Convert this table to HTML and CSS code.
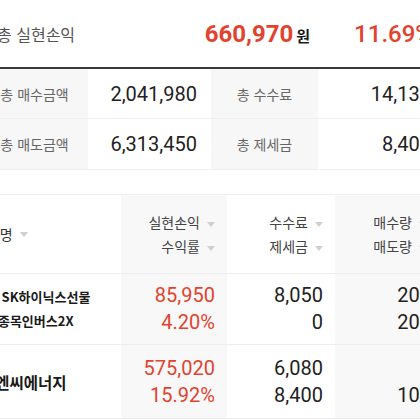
FILE: index.html
```html
<!DOCTYPE html>
<html lang="ko">
<head>
<meta charset="utf-8">
<title>실현손익</title>
<link rel="stylesheet" href="styles.css">
</head>
<body>
<div class="page">
  <div class="total">
    <span class="total-label">총 실현손익</span>
    <span class="total-amount">660,970<span class="won">원</span></span>
    <span class="total-rate">11.69%</span>
  </div>
  <div class="summary">
    <div class="s-label">총 매수금액</div>
    <div class="s-value">2,041,980</div>
    <div class="s-label">총 수수료</div>
    <div class="s-value">14,130</div>
    <div class="s-label">총 매도금액</div>
    <div class="s-value">6,313,450</div>
    <div class="s-label">총 제세금</div>
    <div class="s-value">8,400</div>
  </div>
</div>
<div class="table">
  <div class="cell head name">종목명<svg class="tri" width="8" height="5" viewBox="0 0 8 5"><path d="M0 0h8L4 5z"/></svg></div>
  <div class="cell head num shade">
    <div>실현손익<svg class="tri" width="8" height="5" viewBox="0 0 8 5"><path d="M0 0h8L4 5z"/></svg></div>
    <div>수익률<svg class="tri" width="8" height="5" viewBox="0 0 8 5"><path d="M0 0h8L4 5z"/></svg></div>
  </div>
  <div class="cell head num">
    <div>수수료<svg class="tri" width="8" height="5" viewBox="0 0 8 5"><path d="M0 0h8L4 5z"/></svg></div>
    <div>제세금<svg class="tri" width="8" height="5" viewBox="0 0 8 5"><path d="M0 0h8L4 5z"/></svg></div>
  </div>
  <div class="cell head num last shade">
    <div>매수량<svg class="tri" width="8" height="5" viewBox="0 0 8 5"><path d="M0 0h8L4 5z"/></svg></div>
    <div>매도량<svg class="tri" width="8" height="5" viewBox="0 0 8 5"><path d="M0 0h8L4 5z"/></svg></div>
  </div>

  <div class="cell row1 name">
    <div class="nm-small">신한 SK하이닉스선물</div>
    <div class="nm-small">단일종목인버스2X</div>
  </div>
  <div class="cell row1 val shade red"><div>85,950</div><div>4.20%</div></div>
  <div class="cell row1 val"><div>8,050</div><div>0</div></div>
  <div class="cell row1 val last shade"><div>200</div><div>200</div></div>

  <div class="cell row2 name"><div class="nm-big">지엔씨에너지</div></div>
  <div class="cell row2 val shade red"><div>575,020</div><div>15.92%</div></div>
  <div class="cell row2 val"><div>6,080</div><div>8,400</div></div>
  <div class="cell row2 val last shade"><div>0</div><div>100</div></div>
</div>
</body>
</html>
```

FILE: styles.css
```css
html, body {
  margin: 0;
  padding: 0;
  background: #ffffff;
  overflow: hidden;
}

body {
  font-family: Roboto, "Noto Sans CJK KR", sans-serif;
  color: #222222;
}

.page {
  width: 464px;
  margin-left: -19px;
}

.total {
  display: flex;
  align-items: center;
  padding: 0 12px 0 16px;
  border-bottom: 2px solid #3a3a3a;
  box-sizing: border-box;
  height: 69px;
}

.total-label {
  flex: 1;
  font-size: 16px;
  color: #555555;
  font-family: "Noto Sans CJK KR", sans-serif;
}

.total-amount {
  font-size: 24px;
  font-weight: 700;
  color: #e2432f;
  margin-right: 44px;
}

.won {
  font-family: "Noto Sans CJK KR", sans-serif;
  font-size: 15px;
  font-weight: 700;
  color: #1a1a1a;
  margin-left: 3px;
}

.total-rate {
  font-size: 24px;
  font-weight: 500;
  color: #e2432f;
}

.summary {
  display: grid;
  grid-template-columns: 107px 123px 107px 127px;
  border-bottom: 1px solid #efefef;
}

.s-label,
.s-value {
  height: 49px;
  display: flex;
  align-items: center;
  border-bottom: 1px solid #f0f0f0;
}

.summary > :nth-last-child(-n+4) {
  border-bottom: none;
  height: 50px;
}

.s-label {
  justify-content: center;
  background: #f7f7f7;
  font-family: "Noto Sans CJK KR", sans-serif;
  font-size: 14px;
  color: #666666;
}

.s-value {
  justify-content: flex-end;
  padding-right: 14px;
  font-size: 20px;
  color: #222222;
}

.table {
  display: grid;
  grid-template-columns: 161px 106px 108px 112px;
  margin-left: -40px;
  margin-top: 24px;
  border-top: 1px solid #f0f0f0;
}

.cell {
  border-bottom: 1px solid #eeeeee;
  box-sizing: border-box;
  display: flex;
  flex-direction: column;
  justify-content: center;
}

.shade {
  background: #f8f8f8;
}

.head {
  height: 79px;
  font-family: "Noto Sans CJK KR", sans-serif;
  font-size: 14px;
  color: #444444;
  line-height: 24px;
}

.head.name {
  flex-direction: row;
  align-items: center;
  justify-content: flex-start;
  padding-left: 14px;
  color: #333333;
}

.num {
  align-items: flex-end;
  padding-right: 12px;
}

.head.last {
  padding-right: 20px;
}

.tri {
  margin-left: 7px;
  vertical-align: middle;
  fill: #cfcfcf;
}

.name {
  padding-left: 14px;
  align-items: flex-start;
}

.row1 {
  height: 71px;
}

.row2 {
  height: 74px;
}

.nm-small {
  font-family: "Noto Sans CJK KR", sans-serif;
  font-size: 13px;
  font-weight: 700;
  line-height: 24px;
  color: #1a1a1a;
}

.nm-big {
  font-family: "Noto Sans CJK KR", sans-serif;
  font-size: 15.5px;
  font-weight: 700;
  color: #1a1a1a;
  margin-left: 7px;
}

.val {
  align-items: flex-end;
  padding-right: 12px;
  font-size: 20px;
  line-height: 27px;
  color: #222222;
}

.val.last {
  padding-right: 16px;
}

.red {
  color: #e2432f;
}
```
